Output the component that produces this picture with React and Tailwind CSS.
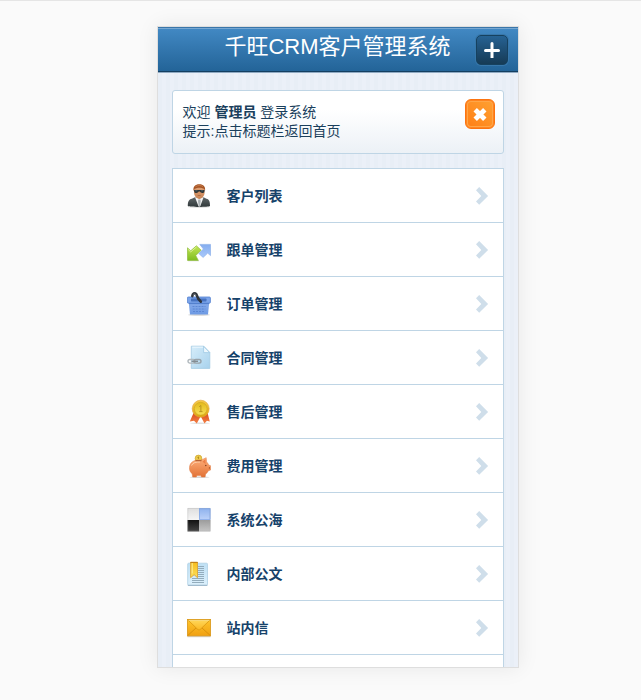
const FONT = "font-['Liberation_Sans','Noto_Sans_CJK_SC',sans-serif]";

function Icon({ children }) {
  return (
    <svg className="h-[25px] w-6 shrink-0" viewBox="0 0 24 25" aria-hidden="true">
      {children}
    </svg>
  );
}

function Grad({ id, from, to, diagonal }) {
  return (
    <linearGradient id={id} x1="0" y1="0" x2={diagonal ? '1' : '0'} y2="1">
      <stop offset="0" stopColor={from} />
      <stop offset="1" stopColor={to} />
    </linearGradient>
  );
}

const AgentIcon = () => (
  <Icon>
    <defs>
      <Grad id="suit" from="#62696b" to="#30383a" />
      <Grad id="skin" from="#dfa277" to="#c98455" />
    </defs>
    <ellipse cx="12" cy="24" rx="11" ry=".8" fill="#000" opacity=".15" />
    <path d="M.8 23c0-4.500 1-6.600 4-7.300l4.200-2h6.600l3.900 2c2.800.7 3.500 2.800 3.500 7.300-1.600 1.200-20.400 1.200-22.200 0z" fill="url(#suit)" />
    <path d="M8 14.200l3.600 9.300h1.500l3.500-9.300z" fill="#f3f4f5" />
    <path d="M11.400 16.500h1.900l.4 1.300-.6 5.500h-1.400l-.7-5.500z" fill="#a9afb2" />
    <path d="M7 6.500c0-3.700 10.600-3.700 10.600 0v3c0 3.300-2.800 6.400-5.300 6.400S7 12.800 7 9.500z" fill="url(#skin)" />
    <path d="M6.600 8C5.700 3.500 8.300 1.200 12.300 1.200c4.100 0 6.500 2.300 5.700 6.800l-1-2.200c-2.400-1.500-6.900-1.500-9.300 0z" fill="#a55424" />
    <path d="M8.500 3.700c2-1.500 5.500-1.500 7.500-.2" stroke="#c77a4a" fill="none" />
    <path d="M7 7h10.600l-.3 1.900c-.5 1.500-3.800 1.500-4.400-.3h-1.200c-.6 1.800-3.900 1.800-4.400.3z" fill="#2c3538" />
    <path d="M8.200 7.800h2.200M14 7.800h2.200" stroke="#60777d" strokeWidth=".7" />
    <path d="M10.700 12.500h3" stroke="#a8653f" strokeWidth=".8" />
  </Icon>
);

const ArrowsIcon = () => (
  <Icon>
    <defs>
      <Grad id="green" from="#c3e655" to="#7fbd20" />
      <Grad id="blue" from="#84adef" to="#a9c9fb" />
    </defs>
    <path d="M1 23.800h11" stroke="#000" opacity=".12" />
    <path d="M.5 10.800l3.200 3 5.700-5 4.800 4.500-5.500 5.200 2.600 4.900H.5z" fill="url(#green)" stroke="#8fbb3c" strokeWidth=".7" />
    <path d="M1.300 12.600l2.400 2.300 5.700-4.900" fill="none" stroke="#e4f6a6" strokeWidth=".8" />
    <path d="M12.800 7.400h10.700v11.200l-2.800-2.500-4.600 4.300-4.200-3.800 4.500-4.600z" fill="url(#blue)" stroke="#8cb0ea" strokeWidth=".7" />
  </Icon>
);

const BasketIcon = () => (
  <Icon>
    <defs>
      <Grad id="basket" from="#86abea" to="#6d9ae4" />
    </defs>
    <ellipse cx="12" cy="23.900" rx="11" ry=".9" fill="#000" opacity=".18" />
    <path d="M1.800 12h20.400l-1.200 11.500H3z" fill="url(#basket)" />
    <rect x=".4" y="6" width="23" height="6.200" rx="1" fill="#7ba4ea" stroke="#5482cf" strokeWidth=".8" />
    <rect x="4" y="7.600" width="15.500" height="2.800" rx=".6" fill="#4672c0" />
    <path d="M2 12.600h20" stroke="#4b78c6" strokeWidth=".8" />
    <path d="M5.500 15.500h13M5.700 18h12.600M6 20.500h12" stroke="#5682cf" strokeWidth=".8" strokeDasharray="2 1" />
    <path d="M5.300 5.200c.2-2.800 2.300-3.700 4-2l2 4.500 2.500 3" fill="none" stroke="#30363c" strokeWidth="2.600" strokeLinecap="round" />
    <path d="M6.300 3.500c1.200-.9 2.100-.4 2.800.8" stroke="#858e95" strokeWidth=".7" fill="none" />
  </Icon>
);

const ContractIcon = () => (
  <Icon>
    <defs>
      <Grad id="paper" from="#d6edfa" to="#a8d2ed" diagonal />
    </defs>
    <path d="M4.300 1.200h12.500l6 6.200v16H4.300z" fill="url(#paper)" stroke="#a2cae2" strokeWidth=".8" />
    <path d="M5.300 2.200h10.800" stroke="#edf8ff" />
    <path d="M16.600 1.400v6.200h6z" fill="#edf8fe" stroke="#9bc7e2" strokeWidth=".7" />
    <g fill="none" strokeWidth="1.400">
      <rect x="1" y="14.500" width="7" height="3.600" rx="1.800" stroke="#b0b8bd" />
      <rect x="7" y="14.500" width="7" height="3.600" rx="1.800" stroke="#98a3aa" />
      <path d="M4.500 16.300h6.500" stroke="#828c93" />
    </g>
  </Icon>
);

const MedalIcon = () => (
  <Icon>
    <defs>
      <Grad id="gold" from="#f7cb4e" to="#dda50e" />
      <Grad id="goldIn" from="#e3b91c" to="#f6e055" />
      <Grad id="ribbon" from="#d94b1d" to="#f48145" />
    </defs>
    <ellipse cx="13" cy="24.300" rx="10" ry=".7" fill="#000" opacity=".12" />
    <path d="M6.500 14l7 3.500-3.700 6.900-2.800-2.600-4.200.7z" fill="url(#ribbon)" />
    <path d="M20.600 14l-6.800 3.500 3.700 6.900 2.400-2.600 2.900.7z" fill="url(#ribbon)" />
    <circle cx="13.700" cy="9.700" r="8.500" fill="url(#gold)" stroke="#dfa637" strokeWidth=".6" />
    <circle cx="13.700" cy="9.700" r="6.400" fill="url(#goldIn)" stroke="#cfa620" strokeWidth=".6" />
    <path d="M12.200 7.700l1.700-1.200v6M12.200 12.600h3.300" fill="none" stroke="#b79620" strokeWidth="1" />
  </Icon>
);

const PigIcon = () => (
  <Icon>
    <defs>
      <Grad id="pig" from="#ffb07c" to="#e27236" />
    </defs>
    <ellipse cx="12.500" cy="24.200" rx="10" ry=".7" fill="#000" opacity=".16" />
    <circle cx="11.500" cy="5.500" r="3.400" fill="#eccb4b" stroke="#c79a22" strokeWidth=".6" />
    <path d="M10.500 4.500l1-.6v2" stroke="#a47f19" strokeWidth=".8" fill="none" />
    <path d="M2.700 13C3.800 8.300 8.500 6.500 14 7.200l5.200-2.500.4 4.300c1 .8 1.600 1.800 2 3l2 .7v4.300l-2.200.7c-.7 1.600-1.700 2.600-2.800 3.300l-.5 3h-3.700l-.5-1.400h-4l-.6 1.400H5.700l-.6-3.300c-2-1.500-2.800-3.900-2.600-6.200z" fill="url(#pig)" stroke="#df7b42" strokeWidth=".5" />
    <path d="M4.500 12.500C6 9.500 9 8.800 13 9" stroke="#ffd0ac" fill="none" />
    <path d="M8.500 7.700h6" stroke="#a34e22" strokeWidth=".9" />
    <path d="M15.500 8.700l2.900-2.600.2 4.800z" fill="#ec8048" />
    <circle cx="18.800" cy="12.500" r=".7" fill="#7a3819" />
    <path d="M22.400 14v1.800" stroke="#9f431a" strokeWidth=".7" />
  </Icon>
);

const SquaresIcon = () => (
  <Icon>
    <defs>
      <Grad id="sqLight" from="#dedede" to="#f5f5f5" />
      <Grad id="sqBlue" from="#8db1ed" to="#bed3fa" />
      <Grad id="sqBlack" from="#111" to="#444" />
      <Grad id="sqGrey" from="#9c9c9c" to="#c5c5c5" />
    </defs>
    <path d="M.5 1h11.500v12H.5z" fill="url(#sqLight)" />
    <path d="M12 1h11.500v12H12z" fill="url(#sqBlue)" />
    <path d="M.5 13h11.500v11.500H.5z" fill="url(#sqBlack)" />
    <path d="M12 13h11.500v11.500H12z" fill="url(#sqGrey)" />
    <path d="M.8 1.400h22.400v22.700H.8z" fill="none" stroke="#aaa" strokeOpacity=".4" strokeWidth=".8" />
    <path d="M12.500 1.800H23v10.700H12.500z" fill="none" stroke="#80a5e4" strokeWidth=".7" />
  </Icon>
);

const BookmarkIcon = () => (
  <Icon>
    <defs>
      <Grad id="page" from="#bfe0f4" to="#dcf0fc" />
      <Grad id="mark" from="#f6bc1b" to="#fce05c" />
    </defs>
    <rect x=".7" y="2.200" width="19.800" height="22" rx="1" fill="url(#page)" stroke="#aecfe4" strokeWidth=".8" />
    <path d="M.8 24.400h19.600" stroke="#8fabc0" strokeWidth=".8" />
    <path d="M11 5.500h6M11 7.500h6M11 9.500h6M11 11.500h6M11 13.500h6M11 15.500h6M5 17.500h12M5 19.500h12M5 21.500h12" stroke="#93acbc" strokeWidth="1.200" />
    <path d="M3.600 1.200h6.900v15.500l-3.400-3-3.500 3z" fill="url(#mark)" stroke="#d89c2a" strokeWidth=".8" />
    <path d="M5.200 2v10.500" stroke="#fff2a5" strokeWidth=".9" />
    <path d="M3.400 1.500h7.300" stroke="#bb7c16" strokeWidth=".9" />
  </Icon>
);

const MailIcon = () => (
  <Icon>
    <defs>
      <Grad id="mail" from="#ffc62c" to="#f0a012" />
      <Grad id="flap" from="#ffd75a" to="#fbb822" />
    </defs>
    <path d="M.5 21.700h23" stroke="#000" opacity=".25" strokeWidth=".8" />
    <rect x=".4" y="4.400" width="23.200" height="16.500" fill="url(#mail)" stroke="#d9971a" strokeWidth=".8" />
    <path d="M1 20.300l8.300-7.600M23 20.300l-8.300-7.600" stroke="#d58d0b" strokeWidth=".9" />
    <path d="M1 5l9.600 9.300c.9.800 1.900.8 2.800 0L23 5z" fill="url(#flap)" stroke="#d9960f" strokeWidth=".8" />
    <path d="M1.500 5.400h21" stroke="#ffeb9f" strokeWidth=".7" />
  </Icon>
);

const ITEMS = [
  ['客户列表', AgentIcon],
  ['跟单管理', ArrowsIcon],
  ['订单管理', BasketIcon],
  ['合同管理', ContractIcon],
  ['售后管理', MedalIcon],
  ['费用管理', PigIcon],
  ['系统公海', SquaresIcon],
  ['内部公文', BookmarkIcon],
  ['站内信', MailIcon],
];

function Header() {
  return (
    <header className="relative h-[46px] shrink-0 border-b border-[#90aac2] bg-[#236498]">
      <div className="h-[45px] border-t border-b border-t-[#3a76a9] border-b-[#143f61] bg-linear-to-b from-[#4289c4] to-[#236498]">
        <div className="border-t border-[#76a7d2] px-2">
          <h1 className="text-center text-[22px] leading-9 text-white">
            <a href="#home">千旺CRM客户管理系统</a>
          </h1>
        </div>
      </div>
      <button
        type="button"
        aria-label="新增"
        className="absolute top-2 right-[10px] flex h-[30px] w-8 items-center justify-center rounded-[5px] border border-[#16415f] bg-linear-to-b from-[#266293] to-[#163b56] shadow-[0_0_0_1px_#3777aa]"
      >
        <svg className="h-4 w-4" viewBox="0 0 16 16" aria-hidden="true">
          <path d="M8 1.500v14M1.500 8.500h13" stroke="#fff" strokeWidth="3" strokeLinecap="round" />
        </svg>
      </button>
    </header>
  );
}

function Welcome() {
  return (
    <section className="relative h-16 rounded-[3px] border border-[#bfd5e5] bg-linear-to-b from-white from-30% to-[#ecf1f6] px-[10px] pt-3 text-sm leading-[19px] text-[#1a3f5c]">
      <p>
        欢迎 <b>管理员</b> 登录系统
      </p>
      <p>提示:点击标题栏返回首页</p>
      <button
        type="button"
        aria-label="关闭"
        className="absolute top-2 right-2 flex h-[30px] w-[30px] items-center justify-center rounded-[6px] border border-[#fc7410] bg-linear-to-tr from-[#ff7d12] to-[#ffa232] shadow-[inset_0_0_0_1px_#ff8420,inset_0_0_0_2px_#ffa648]"
      >
        <svg className="h-4 w-4" viewBox="0 0 16 16" aria-hidden="true">
          <path d="M3.200 3.700l9.600 9.600M12.800 3.700l-9.600 9.600" stroke="#fff" strokeWidth="4.800" />
        </svg>
      </button>
    </section>
  );
}

function Menu() {
  return (
    <nav className="mt-[14px] border border-b-0 border-[#bfd5e5] bg-white">
      <ul>
        {ITEMS.map(([label, Glyph]) => (
          <li key={label} className="border-b border-[#bfd5e5]">
            <a href="#menu" className="flex h-[53px] items-center gap-4 px-[14px] text-sm font-bold text-[#16426a]">
              <Glyph />
              <span className="flex-1">{label}</span>
              <svg className="h-[19px] w-[14px]" viewBox="0 0 14 19" aria-hidden="true">
                <path d="M1 4.200L4.200 1l8.900 8.900-8.900 8.900L1 15.600l5.300-5.700z" fill="#cfdeea" />
              </svg>
            </a>
          </li>
        ))}
        <li className="h-[53px]" aria-hidden="true" />
      </ul>
    </nav>
  );
}

export default function App() {
  return (
    <div className={`flex h-screen flex-col items-center border-t border-[#e5e5e5] bg-[#fafafa] pt-[25px] pr-4 pb-8 pl-[50px] ${FONT}`}>
      <main className="flex min-h-0 w-full max-w-[362px] flex-1 flex-col overflow-hidden border border-[#dedede] bg-[#e9eff7] shadow-[0_0_20px_rgba(0,0,0,0.08)]">
        <Header />
        <div className="min-h-0 flex-1 overflow-hidden bg-[repeating-linear-gradient(90deg,#e8eef6_0px,#e8eef6_4px,#ebf0f8_4px,#ebf0f8_8px)] px-[14px] pt-[17px]">
          <Welcome />
          <Menu />
        </div>
      </main>
    </div>
  );
}
